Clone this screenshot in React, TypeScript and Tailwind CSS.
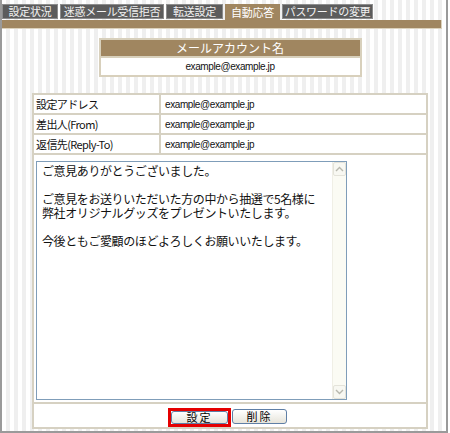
import React from 'react';

const jp = { fontFamily: '"Noto Sans CJK JP", "Liberation Sans", sans-serif' };
const en = { fontFamily: '"Liberation Sans", "Noto Sans CJK JP", sans-serif' };

function Tab({ label, width, active }: { label: string; width: string; active?: boolean }) {
  if (active) {
    return (
      <div className={`${width} h-[16px] bg-[#a08660] text-white text-[11px] tracking-[-0.3px] flex items-center justify-center leading-none`}>
        {label}
      </div>
    );
  }
  return (
    <div className={`${width} h-[15px] mb-[1px] bg-[#5c5c5c] border border-[#8c8c8c] text-[#f2f2f2] text-[11px] tracking-[-0.3px] flex items-center justify-center leading-none`}>
      {label}
    </div>
  );
}

function Row({ label, value }: { label: string; value: string }) {
  return (
    <div className="flex h-[20px] border-b-2 border-[#d6d1c2]">
      <div className="w-[127px] border-r-2 border-[#d6d1c2] pl-[2px] flex items-center text-[11px] tracking-[-0.6px] text-[#111]">
        {label}
      </div>
      <div className="flex-1 pl-[4px] flex items-center text-[10px] tracking-[-0.4px] text-[#111]" style={en}>
        {value}
      </div>
    </div>
  );
}

function Chevron({ up }: { up?: boolean }) {
  return (
    <svg width="9" height="6" viewBox="0 0 9 6">
      <path d={up ? 'M1 5 L4.5 1.5 L8 5' : 'M1 1 L4.5 4.5 L8 1'} fill="none" stroke="#b8b8ae" strokeWidth="1.4" />
    </svg>
  );
}

export default function App() {
  const lines = [
    'ご意見ありがとうございました。',
    '',
    'ご意見をお送りいただいた方の中から抽選で5名様に',
    '弊社オリジナルグッズをプレゼントいたします。',
    '',
    '今後ともご愛顧のほどよろしくお願いいたします。',
  ];

  return (
    <div className="w-[450px] h-[433px] bg-white" style={jp}>
      <div className="w-[448px] h-[433px] border-x-2 border-b-2 border-[#9a9a9a] bg-[repeating-linear-gradient(90deg,#ffffff_0px,#ffffff_4px,#efefef_4px,#efefef_8px)] flex flex-col">
        {/* tabs */}
        <div className="flex items-end gap-[2px] pt-[4px] h-[20px]">
          <Tab label="設定状況" width="w-[56px]" />
          <Tab label="迷惑メール受信拒否" width="w-[104px]" />
          <Tab label="転送設定" width="w-[57px]" />
          <Tab label="自動応答" width="w-[55px]" active />
          <Tab label="パスワードの変更" width="w-[91px]" />
        </div>
        <div className="h-[9px] w-[440px] bg-[#a08660] border-b border-r border-[#dcd2bc]" />

        <div className="ml-[30px] w-[396px] flex flex-col">
          {/* account box */}
          <div className="mt-[9px] mx-auto w-[263px] border-2 border-[#d8d0bc] bg-white">
            <div className="h-[16px] bg-[#a08660] text-white text-[12px] flex items-center justify-center leading-none">
              メールアカウント名
            </div>
            <div className="h-[19px] border-t-2 border-[#d8d0bc] flex items-center justify-center text-[10px] tracking-[-0.4px] text-[#111]" style={en}>
              example@example.jp
            </div>
          </div>

          {/* main table */}
          <div className="mt-[16px] border-x-2 border-t-2 border-b-2 border-[#d6d1c2] bg-white">
            <Row label="設定アドレス" value="example@example.jp" />
            <Row label="差出人(From)" value="example@example.jp" />
            <Row label="返信先(Reply-To)" value="example@example.jp" />
            <div className="h-[249px] border-b-2 border-[#d6d1c2] pt-[6px] pl-[2px]">
              <div className="w-[311px] h-[239px] border border-[#7f9db9] bg-white flex">
                <div className="flex-1 pl-[5px] pt-[2px] text-[12px] leading-[14px] text-[#111] tracking-[-0.4px]">
                  {lines.map((l, i) => (
                    <div key={i} className="h-[14px] whitespace-nowrap">{l}</div>
                  ))}
                </div>
                <div className="w-[14px] bg-[#fbfbf4] border-l border-[#f0efe6] flex flex-col justify-between">
                  <div className="h-[14px] border border-[#e4e3da] rounded-[2px] bg-[#f8f8f2] flex items-center justify-center">
                    <Chevron up />
                  </div>
                  <div className="h-[14px] border border-[#e4e3da] rounded-[2px] bg-[#f8f8f2] flex items-center justify-center">
                    <Chevron />
                  </div>
                </div>
              </div>
            </div>
            <div className="h-[23px] flex items-start pt-[4px] pl-[134px]">
              <div className="w-[63px] h-[19px] border-[3px] border-[#e50000] flex">
                <button className="flex-1 rounded-[3px] border border-[#5f7fa6] bg-gradient-to-b from-white to-[#e6e4da] text-[11px] leading-none text-black tracking-[2px] flex items-center justify-center">
                  設定
                </button>
              </div>
              <button className="ml-[1px] mt-[1px] w-[55px] h-[15px] rounded-[3px] border border-[#5f7fa6] bg-gradient-to-b from-white to-[#e6e4da] text-[11px] leading-none text-black tracking-[2px] flex items-center justify-center">
                削除
              </button>
            </div>
          </div>
        </div>
      </div>
    </div>
  );
}
